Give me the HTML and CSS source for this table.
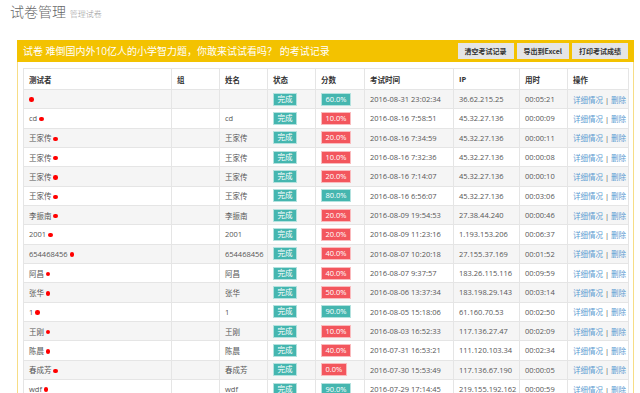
FILE: index.html
```html
<!DOCTYPE html>
<html lang="zh-CN">
<head>
<meta charset="utf-8">
<title>试卷管理</title>
<link rel="stylesheet" href="styles.css">
</head>
<body>
<div class="page">
  <h1 class="page-title">试卷管理 <small>管理试卷</small></h1>
  <div class="portlet">
    <div class="portlet-head">
      <div class="caption">试卷 难倒国内外10亿人的小学智力题，你敢来试试看吗？ 的考试记录</div>
      <div class="actions">
        <button class="btn">清空考试记录</button>
        <button class="btn">导出到Excel</button>
        <button class="btn">打印考试成绩</button>
      </div>
    </div>
    <div class="portlet-body">
      <table class="grid">
        <colgroup>
          <col class="c1"><col class="c2"><col class="c3"><col class="c4"><col class="c5"><col class="c6"><col class="c7"><col class="c8"><col class="c9">
        </colgroup>
        <thead>
          <tr><th>测试者</th><th>组</th><th>姓名</th><th>状态</th><th>分数</th><th>考试时间</th><th>IP</th><th>用时</th><th>操作</th></tr>
        </thead>
        <tbody>
          <tr><td><span class="dot"></span></td><td></td><td></td><td><span class="lbl ok">完成</span></td><td><span class="lbl ok">60.0%</span></td><td>2016-08-31 23:02:34</td><td>36.62.215.25</td><td>00:05:21</td><td><a>详细情况</a> | <a>删除</a></td></tr>
          <tr><td>cd <span class="dot"></span></td><td></td><td>cd</td><td><span class="lbl ok">完成</span></td><td><span class="lbl bad">10.0%</span></td><td>2016-08-16 7:58:51</td><td>45.32.27.136</td><td>00:00:09</td><td><a>详细情况</a> | <a>删除</a></td></tr>
          <tr><td>王家传 <span class="dot"></span></td><td></td><td>王家传</td><td><span class="lbl ok">完成</span></td><td><span class="lbl bad">20.0%</span></td><td>2016-08-16 7:34:59</td><td>45.32.27.136</td><td>00:00:11</td><td><a>详细情况</a> | <a>删除</a></td></tr>
          <tr><td>王家传 <span class="dot"></span></td><td></td><td>王家传</td><td><span class="lbl ok">完成</span></td><td><span class="lbl bad">10.0%</span></td><td>2016-08-16 7:32:36</td><td>45.32.27.136</td><td>00:00:08</td><td><a>详细情况</a> | <a>删除</a></td></tr>
          <tr><td>王家传 <span class="dot"></span></td><td></td><td>王家传</td><td><span class="lbl ok">完成</span></td><td><span class="lbl bad">20.0%</span></td><td>2016-08-16 7:14:07</td><td>45.32.27.136</td><td>00:00:10</td><td><a>详细情况</a> | <a>删除</a></td></tr>
          <tr><td>王家传 <span class="dot"></span></td><td></td><td>王家传</td><td><span class="lbl ok">完成</span></td><td><span class="lbl ok">80.0%</span></td><td>2016-08-16 6:56:07</td><td>45.32.27.136</td><td>00:03:06</td><td><a>详细情况</a> | <a>删除</a></td></tr>
          <tr><td>李振南 <span class="dot"></span></td><td></td><td>李振南</td><td><span class="lbl ok">完成</span></td><td><span class="lbl bad">20.0%</span></td><td>2016-08-09 19:54:53</td><td>27.38.44.240</td><td>00:00:46</td><td><a>详细情况</a> | <a>删除</a></td></tr>
          <tr><td>2001 <span class="dot"></span></td><td></td><td>2001</td><td><span class="lbl ok">完成</span></td><td><span class="lbl bad">20.0%</span></td><td>2016-08-09 11:23:16</td><td>1.193.153.206</td><td>00:06:37</td><td><a>详细情况</a> | <a>删除</a></td></tr>
          <tr><td>654468456 <span class="dot"></span></td><td></td><td>654468456</td><td><span class="lbl ok">完成</span></td><td><span class="lbl bad">40.0%</span></td><td>2016-08-07 10:20:18</td><td>27.155.37.169</td><td>00:01:52</td><td><a>详细情况</a> | <a>删除</a></td></tr>
          <tr><td>阿昌 <span class="dot"></span></td><td></td><td>阿昌</td><td><span class="lbl ok">完成</span></td><td><span class="lbl bad">40.0%</span></td><td>2016-08-07 9:37:57</td><td>183.26.115.116</td><td>00:09:59</td><td><a>详细情况</a> | <a>删除</a></td></tr>
          <tr><td>张华 <span class="dot"></span></td><td></td><td>张华</td><td><span class="lbl ok">完成</span></td><td><span class="lbl bad">50.0%</span></td><td>2016-08-06 13:37:34</td><td>183.198.29.143</td><td>00:03:14</td><td><a>详细情况</a> | <a>删除</a></td></tr>
          <tr><td>1 <span class="dot"></span></td><td></td><td>1</td><td><span class="lbl ok">完成</span></td><td><span class="lbl ok">90.0%</span></td><td>2016-08-05 15:18:06</td><td>61.160.70.53</td><td>00:02:50</td><td><a>详细情况</a> | <a>删除</a></td></tr>
          <tr><td>王刚 <span class="dot"></span></td><td></td><td>王刚</td><td><span class="lbl ok">完成</span></td><td><span class="lbl bad">10.0%</span></td><td>2016-08-03 16:52:33</td><td>117.136.27.47</td><td>00:02:09</td><td><a>详细情况</a> | <a>删除</a></td></tr>
          <tr><td>陈晨 <span class="dot"></span></td><td></td><td>陈晨</td><td><span class="lbl ok">完成</span></td><td><span class="lbl bad">40.0%</span></td><td>2016-07-31 16:53:21</td><td>111.120.103.34</td><td>00:02:34</td><td><a>详细情况</a> | <a>删除</a></td></tr>
          <tr><td>春成芳 <span class="dot"></span></td><td></td><td>春成芳</td><td><span class="lbl ok">完成</span></td><td><span class="lbl bad">0.0%</span></td><td>2016-07-30 15:53:49</td><td>117.136.67.190</td><td>00:00:05</td><td><a>详细情况</a> | <a>删除</a></td></tr>
          <tr><td>wdf <span class="dot"></span></td><td></td><td>wdf</td><td><span class="lbl ok">完成</span></td><td><span class="lbl ok">90.0%</span></td><td>2016-07-29 17:14:45</td><td>219.155.192.162</td><td>00:00:59</td><td><a>详细情况</a> | <a>删除</a></td></tr>
        </tbody>
      </table>
    </div>
  </div>
</div>
</body>
</html>
```
FILE: styles.css
```css
html, body {
  margin: 0;
  padding: 0;
  background: #fff;
}
body {
  font-family: "Open Sans", "Noto Sans CJK SC", sans-serif;
  font-size: 7.5px;
  color: #333;
}
.page {
  padding: 0 6px 0 10px;
}
.page-title {
  margin: 0;
  padding: 2px 0 0 0;
  height: 40px;
  box-sizing: border-box;
  font-size: 14px;
  line-height: 20px;
  font-weight: 300;
  color: #666;
}
.page-title small {
  font-size: 8px;
  color: #999;
  font-weight: 300;
}
.portlet {
  margin-left: 7px;
  border: 1px solid #f7dd86;
  border-top: 0;
}
.portlet-head {
  background: #f3c200;
  height: 22px;
  margin: 0 -1px;
  padding: 0 6px;
  display: flex;
  align-items: center;
  justify-content: space-between;
}
.caption {
  color: #fff;
  font-size: 10px;
  line-height: 14px;
}
.actions {
  display: flex;
  gap: 3px;
  margin-right: 0;
}
.btn {
  font-family: "Noto Sans CJK SC", sans-serif;
  font-size: 7px;
  font-weight: 700;
  color: #333;
  background: #e5e5e5;
  border: 0;
  height: 16px;
  padding: 0 7px;
  line-height: 16px;
  margin: 0;
}
.portlet-body {
  padding: 6px 5px 10px 5px;
}
.grid {
  width: 100%;
  border-collapse: collapse;
  table-layout: fixed;
}
.c1 { width: 148px; }
.c2 { width: 48px; }
.c3 { width: 48px; }
.c4 { width: 48px; }
.c5 { width: 49px; }
.c6 { width: 89px; }
.c7 { width: 66px; }
.c8 { width: 48px; }
.c9 { width: 61px; }
.grid th, .grid td {
  border: 1px solid #e5e5e5;
  padding: 0 5px;
  text-align: left;
  white-space: nowrap;
  overflow: hidden;
  vertical-align: middle;
}
.grid th {
  height: 20px;
  font-weight: 700;
  color: #333;
}
.grid td {
  height: 18.33px;
  color: #555;
}
.grid tbody tr:nth-child(odd) td {
  background: #f5f5f5;
}
.dot {
  display: inline-block;
  width: 4.5px;
  height: 4.5px;
  border-radius: 50%;
  background: #f00;
  vertical-align: middle;
  position: relative;
  top: -0.5px;
}
.lbl {
  display: inline-block;
  color: #fff;
  padding: 0 3.5px;
  line-height: 11px;
  height: 11px;
  border: 0.5px solid rgba(255,255,255,0.6);
  vertical-align: middle;
}
.ok { background: #45b6af; }
.bad { background: #f3565d; }
.grid a {
  color: #5b9bd1;
  text-decoration: none;
}
```
